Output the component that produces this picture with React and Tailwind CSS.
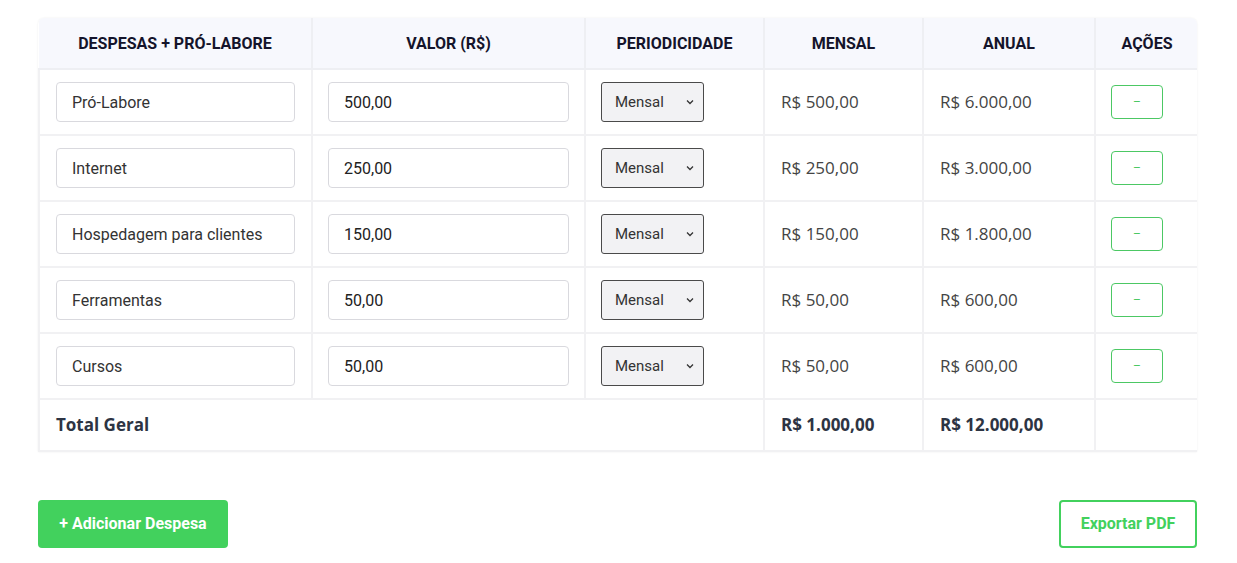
import React from "react";

const rows = [
  ["Pró-Labore", "500,00", "R$ 500,00", "R$ 6.000,00"],
  ["Internet", "250,00", "R$ 250,00", "R$ 3.000,00"],
  ["Hospedagem para clientes", "150,00", "R$ 150,00", "R$ 1.800,00"],
  ["Ferramentas", "50,00", "R$ 50,00", "R$ 600,00"],
  ["Cursos", "50,00", "R$ 50,00", "R$ 600,00"],
];

export default function App() {
  return (
    <div className="bg-white w-[1237px] h-[563px] pt-[18px] px-[38px]" style={{ fontFamily: "Roboto, sans-serif" }}>
      <div className="w-[1159px] rounded-t-[6px] shadow-[0_0_2px_rgba(0,0,0,0.08)] overflow-hidden">
        <table className="w-full border-collapse table-fixed">
          <colgroup>
            <col className="w-[273px]" />
            <col className="w-[273px]" />
            <col className="w-[179px]" />
            <col className="w-[159px]" />
            <col className="w-[172px]" />
            <col className="w-[103px]" />
          </colgroup>
          <thead>
            <tr className="bg-[#f7f8fd] h-[51px]">
              {["DESPESAS + PRÓ-LABORE", "VALOR (R$)", "PERIODICIDADE", "MENSAL", "ANUAL", "AÇÕES"].map((h, i) => (
                <th
                  key={h}
                  className={`text-[16px] pt-[2px] font-bold text-[#14142b] text-center border-[#eeeff3] ${i < 5 ? "border-r-2" : ""} border-b-2`}
                >
                  {h}
                </th>
              ))}
            </tr>
          </thead>
          <tbody>
            {rows.map((r) => (
              <tr key={r[0]} className="h-[66px]">
                <td className="border-2 border-t-0 border-[#f1f1f3] px-[16px]">
                  <input
                    readOnly
                    value={r[0]}
                    className="w-full h-[40px] border border-[#d9d9de] rounded-[4px] px-[15px] text-[16px] text-[#333] outline-none"
                  />
                </td>
                <td className="border-2 border-t-0 border-[#f1f1f3] px-[15px]">
                  <input
                    readOnly
                    value={r[1]}
                    className="w-full h-[40px] border border-[#d9d9de] rounded-[4px] px-[15px] text-[16px] text-[#222] outline-none"
                  />
                </td>
                <td className="border-2 border-t-0 border-[#f1f1f3] px-[15px]">
                  <div className="w-[103px] h-[40px] border border-[#4a4a4a] rounded-[3px] bg-[#f2f2f4] flex items-center justify-between pl-[13px] pr-[8px] text-[15px] text-[#333]">
                    <span>Mensal</span>
                    <svg width="10" height="10" viewBox="0 0 10 10">
                      <path d="M2 3.5 L5 6.5 L8 3.5" fill="none" stroke="#333" strokeWidth="1.3" />
                    </svg>
                  </div>
                </td>
                <td className="border-2 border-t-0 border-[#f1f1f3] px-[16px] text-[17px] text-[#444]" style={{ fontFamily: "'Open Sans', sans-serif" }}>
                  {r[2]}
                </td>
                <td className="border-2 border-t-0 border-[#f1f1f3] px-[16px] text-[17px] text-[#444]" style={{ fontFamily: "'Open Sans', sans-serif" }}>
                  {r[3]}
                </td>
                <td className="border-2 border-t-0 border-[#f1f1f3] px-[15px]">
                  <button className="w-[52px] h-[34px] border border-[#4cc864] rounded-[4px] text-[#4cc864] text-[12px] flex items-center justify-center">
                    –
                  </button>
                </td>
              </tr>
            ))}
            <tr className="h-[52px]" style={{ fontFamily: "'Open Sans', sans-serif" }}>
              <td colSpan={3} className="border-2 border-t-0 border-[#f1f1f3] px-[16px] text-[17px] font-bold text-[#2d3443]">
                Total Geral
              </td>
              <td className="border-2 border-t-0 border-[#f1f1f3] px-[16px] text-[17px] font-bold text-[#2d3443]">
                R$ 1.000,00
              </td>
              <td className="border-2 border-t-0 border-[#f1f1f3] px-[16px] text-[17px] font-bold text-[#2d3443]">
                R$ 12.000,00
              </td>
              <td className="border-2 border-t-0 border-[#f1f1f3]"></td>
            </tr>
          </tbody>
        </table>
      </div>
      <div className="flex justify-between mt-[48px] w-[1159px]">
        <button className="w-[190px] h-[48px] bg-[#42d15d] rounded-[4px] text-white font-bold text-[16px]">
          + Adicionar Despesa
        </button>
        <button className="w-[138px] h-[48px] border-2 border-[#42d15d] rounded-[4px] text-[#42d15d] font-bold text-[16px] bg-white">
          Exportar PDF
        </button>
      </div>
    </div>
  );
}
